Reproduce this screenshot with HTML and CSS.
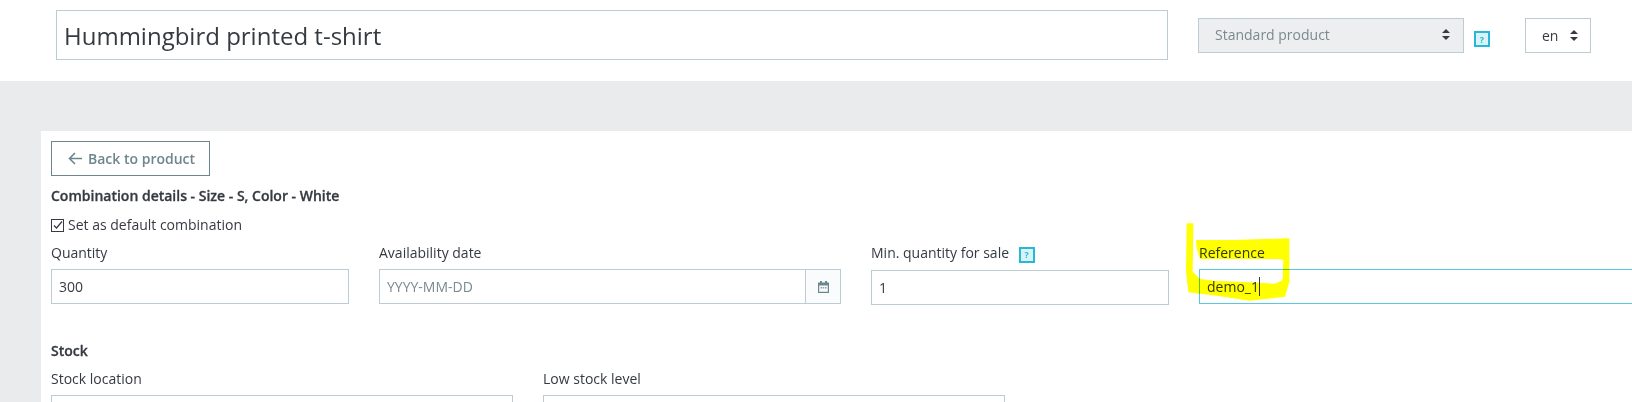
FILE: index.html
```html
<!DOCTYPE html>
<html lang="en">
<head>
    <meta charset="UTF-8">
    <meta name="viewport" content="width=device-width, initial-scale=1.0">
    <title>Combination details</title>
    <link rel="stylesheet" href="styles.css">
</head>
<body>
    <div class="topbar">
        <input type="text" class="title-input" value="Hummingbird printed t-shirt">
        <div class="select select-type">
            <span>Standard product</span>
            <svg class="updown" width="8" height="11" viewBox="0 0 8 11"><path d="M4 0 8 4H0zM4 11 0 7h8z"/></svg>
        </div>
        <span class="help help-top">?</span>
        <div class="select select-lang">
            <span>en</span>
            <svg class="updown" width="8" height="11" viewBox="0 0 8 11"><path d="M4 0 8 4H0zM4 11 0 7h8z"/></svg>
        </div>
    </div>

    <div class="content">
        <div class="panel">
            <a href="#" class="back-btn">
                <svg width="14" height="13" viewBox="0 0 14 13"><path d="M7 1 1.5 6.5 7 12M1.5 6.5H14" fill="none" stroke="currentColor" stroke-width="1.6"/></svg>
                Back to product
            </a>
            <h2 class="section-title">Combination details - Size - S, Color - White</h2>
            <label class="check-row">
                <svg width="13" height="13" viewBox="0 0 13 13"><rect x=".5" y=".5" width="12" height="12" fill="#fff" stroke="#363a41"/><path d="M3 6.5 5.5 9 11 2.5" fill="none" stroke="#363a41" stroke-width="1.2"/></svg>
                Set as default combination
            </label>

            <div class="form-row">
                <div class="field field-qty">
                    <label>Quantity</label>
                    <input type="text" class="input" value="300">
                </div>
                <div class="field field-date">
                    <label>Availability date</label>
                    <div class="input-group">
                        <input type="text" class="input" placeholder="YYYY-MM-DD">
                        <span class="addon">
                            <svg width="11" height="12" viewBox="0 0 11 12"><path d="M2 0h2v1.500h3V0h2v1.500h2V12H0V1.500h2zM1.200 4.500V10.800h8.600V4.500z" fill="#6c868e"/><path d="M2.500 6h1.500v1.500H2.500zM4.750 6h1.500v1.500H4.750zM7 6h1.500v1.500H7z" fill="#8fa3a9"/></svg>
                        </span>
                    </div>
                </div>
                <div class="field field-min">
                    <label>Min. quantity for sale <span class="help help-label">?</span></label>
                    <input type="text" class="input" value="1">
                </div>
                <div class="field field-ref">
                    <label>Reference</label>
                    <div class="input input-focus">demo_1<span class="caret"></span></div>
                </div>
            </div>

            <h2 class="section-title stock-title">Stock</h2>
            <div class="form-row stock-row">
                <div class="field field-location">
                    <label>Stock location</label>
                    <input type="text" class="input">
                </div>
                <div class="field field-location">
                    <label>Low stock level</label>
                    <input type="text" class="input">
                </div>
            </div>
        </div>
    </div>

    <!-- marker scribble over the reference field -->
    <svg class="marker" width="140" height="110" viewBox="0 0 420 330">
        <path fill="#ffff00" d="M110 55H130L128 200 150 222 200 228 300 232 375 236 398 225 400 165 385 162H150L140 130 138 105 250 105 418 100V230L405 275 300 287 200 272 115 262 108 200z"/>
    </svg>
</body>
</html>
```

FILE: styles.css
```css
* {
    margin: 0;
    padding: 0;
    box-sizing: border-box;
    font-family: 'Open Sans', sans-serif;
}

html, body {
    height: 402px;
    overflow: hidden;
}

body {
    background-color: #eaebec;
    color: #363a41;
    font-size: 14px;
}

.topbar {
    height: 81px;
    background-color: white;
    display: flex;
    align-items: flex-start;
    padding-left: 56px;
}

.title-input {
    width: 1112px;
    height: 50px;
    margin-top: 10px;
    padding: 0 7px;
    border: 1px solid #bbcdd2;
    font-size: 24px;
    color: #363a41;
    outline: none;
}

.select {
    height: 35px;
    margin-top: 18px;
    border: 1px solid #bbcdd2;
    display: flex;
    align-items: center;
    justify-content: space-between;
}

.select-type {
    width: 266px;
    margin-left: 30px;
    padding: 0 13px 2px 16px;
    background-color: #eceeef;
    color: #7a8a90;
}

.select-lang {
    width: 66px;
    margin-left: 35px;
    padding: 0 12px 0 16px;
}

.updown {
    fill: #363a41;
}

.help {
    display: inline-flex;
    align-items: center;
    justify-content: center;
    width: 16px;
    height: 16px;
    border: 2px solid #25b9d7;
    background-color: #d9f3f8;
    color: #25b9d7;
    font-size: 9px;
    font-weight: 700;
    line-height: 1;
}

.help-top {
    margin-top: 31px;
    margin-left: 10px;
}

.help-label {
    margin-left: 6px;
    vertical-align: 0;
}

.content {
    padding: 50px 0 0 41px;
}

.panel {
    background-color: white;
    padding: 10px 10px 0;
    height: 300px;
}

.back-btn {
    display: inline-flex;
    align-items: center;
    gap: 6px;
    width: 159px;
    height: 35px;
    padding-left: 16px;
    border: 1px solid #6c868e;
    color: #6c868e;
    font-weight: 600;
    text-decoration: none;
}

.section-title {
    margin-top: 9px;
    font-size: 14px;
    font-weight: 600;
    line-height: 22px;
    -webkit-text-stroke: 0.3px #363a41;
}

.check-row {
    display: flex;
    align-items: center;
    gap: 4px;
    margin-top: 8px;
    line-height: 20px;
}

.form-row {
    display: flex;
    margin-top: 8px;
}

.field label {
    display: block;
    height: 26px;
    line-height: 20px;
}

.field-qty {
    width: 298px;
    margin-right: 30px;
}

.field-date {
    width: 462px;
    margin-right: 30px;
}

.field-min {
    width: 298px;
    margin-right: 30px;
}

.field-min label {
    height: 27px;
}

.field-ref {
    flex: 1;
    margin-right: -30px;
}

.input {
    display: block;
    width: 100%;
    height: 35px;
    padding: 0 7px;
    border: 1px solid #bbcdd2;
    font-size: 14px;
    color: #363a41;
    line-height: 33px;
    outline: none;
}

.input::placeholder {
    color: #7a8a90;
    opacity: 1;
}

.input-focus {
    border-color: #5bc8e2;
}

.caret {
    display: inline-block;
    width: 1px;
    height: 19px;
    background-color: #363a41;
    vertical-align: -4px;
}

.input-group {
    display: flex;
}

.input-group .input {
    flex: 1;
    border-right: none;
}

.addon {
    width: 36px;
    height: 35px;
    display: flex;
    align-items: center;
    justify-content: center;
    border: 1px solid #bbcdd2;
    background-color: #fafbfc;
}

.stock-title {
    margin-top: 35px;
}

.stock-row {
    margin-top: 7px;
}

.field-location {
    width: 462px;
    margin-right: 30px;
}

.marker {
    position: absolute;
    left: 1150px;
    top: 205px;
    mix-blend-mode: multiply;
}
```
